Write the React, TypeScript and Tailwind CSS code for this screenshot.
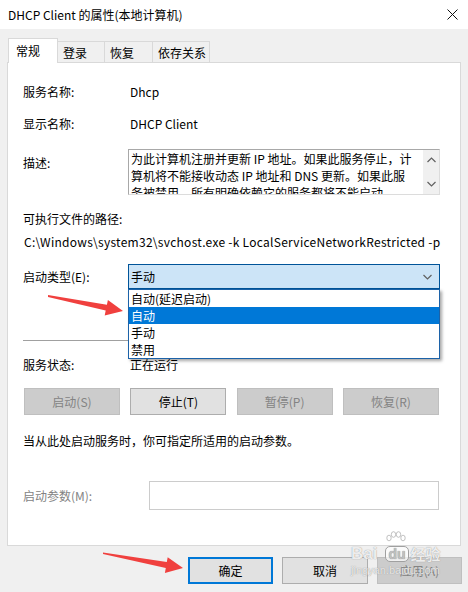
import React from "react";

const tabs = [
  { label: "常规", active: true },
  { label: "登录", active: false, w: "w-[46px]" },
  { label: "恢复", active: false, w: "w-[48px]" },
  { label: "依存关系", active: false, w: "w-[58px]" },
];

const startOptions = ["自动(延迟启动)", "自动", "手动", "禁用"];

// Buttons for the service status row
const serviceButtons = [
  { label: "启动(S)", enabled: false },
  { label: "停止(T)", enabled: true },
  { label: "暂停(P)", enabled: false },
  { label: "恢复(R)", enabled: false },
];

const Chevron: React.FC<{ up?: boolean }> = ({ up }) => (
  <svg width="9" height="6" viewBox="0 0 9 6" className="block">
    <path
      d={up ? "M0.5 5 L4.5 1 L8.5 5" : "M0.5 1 L4.5 5 L8.5 1"}
      fill="none"
      stroke="#606060"
      strokeWidth="1.2"
    />
  </svg>
);

const TitleBar: React.FC = () => (
  <div className="h-[29px] bg-white flex items-center justify-between pl-[8px] pr-[8px]">
    <span className="leading-[18px]">DHCP Client 的属性(本地计算机)</span>
    <svg width="11" height="11" viewBox="0 0 11 11" className="mr-[2px]">
      <path d="M0.5 0.5 L10.5 10.5 M10.5 0.5 L0.5 10.5" stroke="#111" strokeWidth="1" />
    </svg>
  </div>
);

const Tabs: React.FC = () => (
  <div className="flex items-end h-[33px] pl-[8px]">
    {tabs.map((t, i) =>
      t.active ? (
        <div
          key={t.label}
          className="relative z-10 -mb-px h-[25px] w-[50px] bg-white border-t border-l border-r border-[#d9d9d9] pl-[7px] pt-[3px] leading-[18px]"
        >
          {t.label}
        </div>
      ) : (
        <div
          key={t.label}
          className={`h-[21px] ${t.w} border-t border-[#d9d9d9] pl-[5px] pt-[2px] leading-[18px] ${
            i === tabs.length - 1 ? "border-r" : ""
          } ${i > 1 ? "border-l" : ""}`}
        >
          {t.label}
        </div>
      )
    )}
  </div>
);

const Row: React.FC<{ label: string; children: React.ReactNode; className?: string }> = ({
  label,
  children,
  className,
}) => (
  <div className={`flex h-[18px] leading-[18px] ${className ?? ""}`}>
    <span className="w-[105px] shrink-0">{label}</span>
    <span className="pl-[2px] whitespace-nowrap">{children}</span>
  </div>
);

const Description: React.FC = () => (
  <div className="flex mt-[16px]">
    <span className="w-[105px] shrink-0 pt-[5px] leading-[18px]">描述:</span>
    <div className="w-[312px] h-[46px] flex border border-[#a8a8a8] border-r-[#dcdcdc] border-b-[#dcdcdc] bg-white overflow-hidden">
      <div className="flex-1 pl-[2px] leading-[17px] whitespace-nowrap overflow-hidden">
        <div>为此计算机注册并更新 IP 地址。如果此服务停止，计</div>
        <div>算机将不能接收动态 IP 地址和 DNS 更新。如果此服</div>
        <div>务被禁用，所有明确依赖它的服务都将不能启动。</div>
      </div>
      <div className="w-[16px] bg-[#f0f0f0] flex flex-col items-center justify-between pt-[7px] pb-[7px]">
        <Chevron up />
        <Chevron />
      </div>
    </div>
  </div>
);

const StartupType: React.FC = () => (
  <div className="flex mt-[13px]">
    <span className="w-[105px] shrink-0 leading-[25px]">启动类型(E):</span>
    <div className="relative">
      <div className="w-[312px] h-[25px] bg-[#cce4f7] border border-[#005499] flex items-center justify-between pl-[2px] pr-[7px]">
        <span className="leading-[18px]">手动</span>
        <Chevron />
      </div>
      <div className="absolute left-0 top-full z-20 w-[312px] bg-white border border-[#1c62a8] shadow-[2px_2px_3px_rgba(0,0,0,0.35)]">
        {startOptions.map((o) => (
          <div
            key={o}
            className={`h-[17px] leading-[17px] pl-[2px] ${
              o === "自动" ? "bg-[#0078d7] text-white" : ""
            }`}
          >
            {o}
          </div>
        ))}
      </div>
    </div>
  </div>
);

const ServiceButtons: React.FC = () => (
  <div className="flex justify-between w-[415px] ml-[1px] mt-[14px]">
    {serviceButtons.map((b) => (
      <div
        key={b.label}
        className={`w-[96px] h-[27px] flex items-center justify-center border ${
          b.enabled
            ? "bg-[#e1e1e1] border-[#adadad] text-black"
            : "bg-[#cccccc] border-[#bfbfbf] text-[#838383]"
        }`}
      >
        {b.label}
      </div>
    ))}
  </div>
);

const Arrows: React.FC = () => (
  <svg className="absolute inset-0 z-30 pointer-events-none" width="468" height="592">
    <polygon
      points="48,295 106.9,304.8 107.9,299.9 123,311 104.7,315.5 105.7,310.6 48,297"
      fill="#f0403e"
    />
    <polygon
      points="103,552.5 166.8,562.1 167.7,557.2 183,568 164.9,573 165.8,568.1 103,554"
      fill="#f0403e"
    />
  </svg>
);

// Baidu jingyan watermark, faint white with grey edge
const Watermark: React.FC = () => (
  <div className="absolute left-[351px] top-[536px] z-30 pointer-events-none text-white/85 [text-shadow:0_0_1px_#7a7a7a]">
    <div className="flex items-end h-[28px]">
      <span className="text-[17px] font-bold leading-[20px] font-['Liberation_Sans',sans-serif]">Bai</span>
      <span className="relative ml-[8px] mb-[2px]">
        <svg width="22" height="14" viewBox="0 0 22 14" className="absolute left-0 -top-[15px]">
          <g fill="rgba(255,255,255,0.85)" stroke="#9a9a9a" strokeWidth="0.6">
            <ellipse cx="4" cy="7" rx="2.2" ry="2.8" />
            <ellipse cx="8.5" cy="3.5" rx="2.2" ry="2.8" />
            <ellipse cx="13.5" cy="3.5" rx="2.2" ry="2.8" />
            <ellipse cx="18" cy="7" rx="2.2" ry="2.8" />
          </g>
        </svg>
        <span className="block h-[16px] px-[2px] rounded-[5px] border border-[#a0a0a0] bg-white/70 text-[#c0c0c0] text-[14px] font-bold leading-[14px] font-['Liberation_Sans',sans-serif]">
          du
        </span>
      </span>
      <span className="ml-[2px] text-[15px] font-bold leading-[20px]">经验</span>
    </div>
    <div className="text-[11px] leading-[12px] font-['Liberation_Sans',sans-serif] text-white/80">
      jingyan.baidu.com
    </div>
  </div>
);

export default function App() {
  return (
    <div className="relative w-[468px] h-[592px] overflow-hidden bg-[#f0f0f0] text-[12px] text-black font-['Noto_Sans_CJK_SC','Noto_Sans',sans-serif]">
      <TitleBar />
      <Tabs />

      {/* Tab page */}
      <div className="ml-[7px] w-[454px] bg-white border border-[#d9d9d9] pl-[15px] pb-[35px] flex flex-col">
        <Row label="服务名称:" className="mt-[20px]">Dhcp</Row>
        <Row label="显示名称:" className="mt-[14px]">DHCP Client</Row>
        <Description />
        <div className="mt-[15px] h-[18px] leading-[18px]">可执行文件的路径:</div>
        <div className="mt-[5px] h-[18px] leading-[18px] pl-[1px] whitespace-nowrap tracking-[0.27px]">
          C:\Windows\system32\svchost.exe -k LocalServiceNetworkRestricted -p
        </div>
        <StartupType />
        <div className="mt-[51px] h-px w-[417px] bg-[#a0a0a0]" />
        <Row label="服务状态:" className="mt-[15px]">正在运行</Row>
        <ServiceButtons />
        <div className="mt-[17px] h-[18px] leading-[18px]">
          当从此处启动服务时，你可指定所适用的启动参数。
        </div>
        <div className="flex mt-[31px]">
          <span className="w-[126px] shrink-0 leading-[29px] text-[#838383]">启动参数(M):</span>
          <div className="w-[290px] h-[29px] border border-[#cccccc] bg-white" />
        </div>
      </div>

      {/* Dialog buttons */}
      <div className="flex justify-end gap-[9px] pr-[6px] mt-[11px]">
        <div className="w-[85px] h-[27px] flex items-center justify-center bg-[#e1e1e1] border-2 border-[#0078d7]">
          确定
        </div>
        <div className="w-[86px] h-[27px] flex items-center justify-center bg-[#e1e1e1] border border-[#adadad]">
          取消
        </div>
        <div className="w-[85px] h-[27px] flex items-center justify-center bg-[#cccccc] border border-[#bfbfbf] text-[#838383]">
          应用(A)
        </div>
      </div>

      <Arrows />
      <Watermark />
    </div>
  );
}
